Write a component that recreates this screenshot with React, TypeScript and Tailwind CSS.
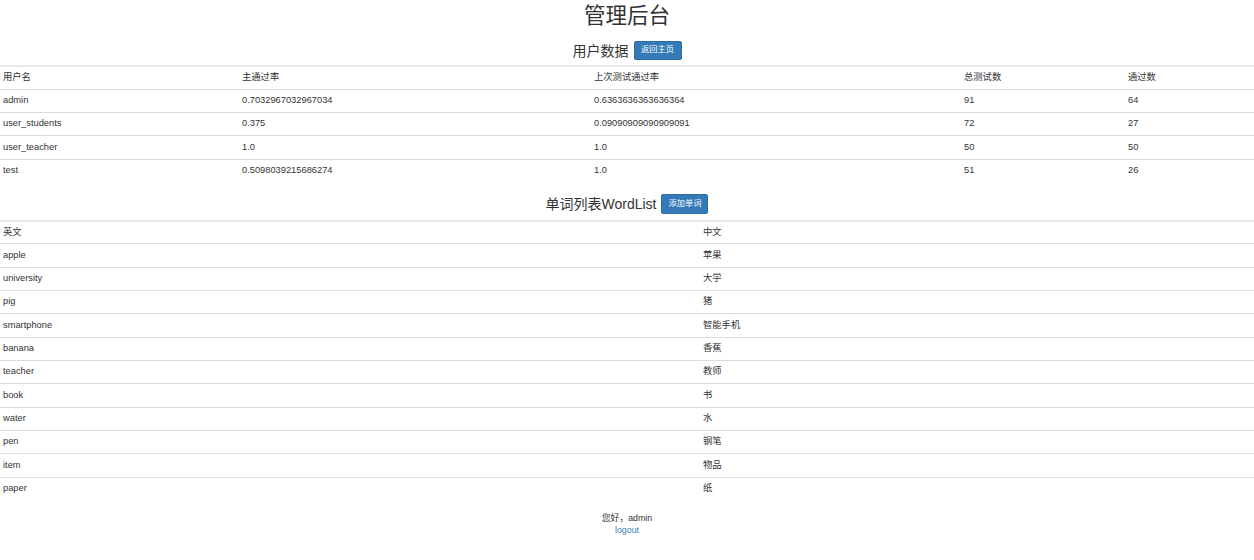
import React from "react";

const users = [
  { name: "admin", rate: "0.7032967032967034", last: "0.6363636363636364", total: "91", pass: "64" },
  { name: "user_students", rate: "0.375", last: "0.09090909090909091", total: "72", pass: "27" },
  { name: "user_teacher", rate: "1.0", last: "1.0", total: "50", pass: "50" },
  { name: "test", rate: "0.5098039215686274", last: "1.0", total: "51", pass: "26" },
];

const words = [
  ["apple", "苹果"],
  ["university", "大学"],
  ["pig", "猪"],
  ["smartphone", "智能手机"],
  ["banana", "香蕉"],
  ["teacher", "教师"],
  ["book", "书"],
  ["water", "水"],
  ["pen", "钢笔"],
  ["item", "物品"],
  ["paper", "纸"],
];

const cell = "h-[23.33px] border-t border-[#dddddd] px-[3px] text-left align-middle font-normal";

export default function App() {
  return (
    <div
      className="min-h-[560px] w-full bg-white text-[9.3px] text-[#333333]"
      style={{ fontFamily: '"Liberation Sans", "Noto Sans CJK SC", sans-serif' }}
    >
      <div className="flex h-[33px] items-center justify-center pt-[1px] text-[21.5px] leading-none">管理后台</div>

      <div className="flex h-[32px] items-center justify-center gap-[5px] pt-[3px]">
        <span className="text-[14px] leading-none">用户数据</span>
        <button className="h-[19.5px] w-[48px] rounded-[2px] border border-[#2e6da4] bg-[#337ab7] text-[8.2px] leading-none text-white">
          返回主页
        </button>
      </div>

      <table className="w-full table-fixed border-collapse">
        <colgroup>
          <col className="w-[239px]" />
          <col className="w-[352px]" />
          <col className="w-[370px]" />
          <col className="w-[164px]" />
          <col />
        </colgroup>
        <thead>
          <tr>
            <th className={`${cell} border-t-2 border-[#e8e8e8]`}>用户名</th>
            <th className={`${cell} border-t-2 border-[#e8e8e8]`}>主通过率</th>
            <th className={`${cell} border-t-2 border-[#e8e8e8]`}>上次测试通过率</th>
            <th className={`${cell} border-t-2 border-[#e8e8e8]`}>总测试数</th>
            <th className={`${cell} border-t-2 border-[#e8e8e8]`}>通过数</th>
          </tr>
        </thead>
        <tbody>
          {users.map((u) => (
            <tr key={u.name}>
              <td className={cell}>{u.name}</td>
              <td className={cell}>{u.rate}</td>
              <td className={cell}>{u.last}</td>
              <td className={cell}>{u.total}</td>
              <td className={cell}>{u.pass}</td>
            </tr>
          ))}
        </tbody>
      </table>

      <div className="flex h-[37px] items-center justify-center gap-[5px] pt-[6px]">
        <span className="text-[14px] leading-none">单词列表WordList</span>
        <button className="h-[19.5px] w-[47px] rounded-[2px] border border-[#2e6da4] bg-[#337ab7] text-[8.2px] leading-none text-white">
          添加单词
        </button>
      </div>

      <table className="w-full table-fixed border-collapse">
        <colgroup>
          <col className="w-[700px]" />
          <col />
        </colgroup>
        <thead>
          <tr>
            <th className={`${cell} border-t-2 border-[#e8e8e8]`}>英文</th>
            <th className={`${cell} border-t-2 border-[#e8e8e8]`}>中文</th>
          </tr>
        </thead>
        <tbody>
          {words.map(([en, zh]) => (
            <tr key={en}>
              <td className={cell}>{en}</td>
              <td className={cell}>{zh}</td>
            </tr>
          ))}
        </tbody>
      </table>

      <div className="flex flex-col items-center pt-[11px] text-[8.8px] leading-[12px]">
        <span>您好，admin</span>
        <a href="#" className="text-[#337ab7]">logout</a>
      </div>
    </div>
  );
}
